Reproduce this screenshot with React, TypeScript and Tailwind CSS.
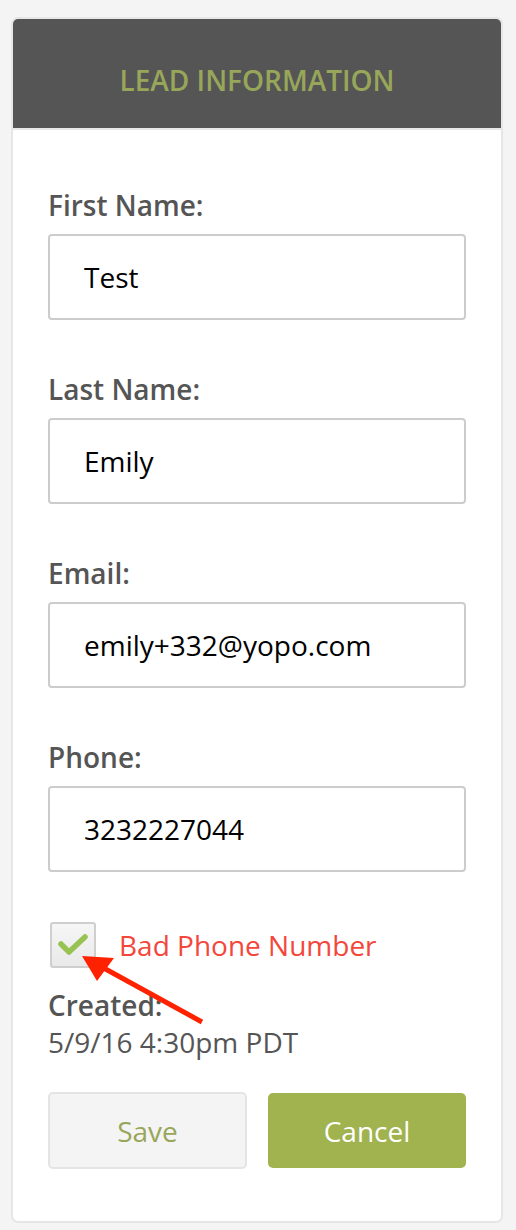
const FIELDS = [
  { label: "First Name:", value: "Test" },
  { label: "Last Name:", value: "Emily" },
  { label: "Email:", value: "emily+332@yopo.com" },
  { label: "Phone:", value: "3232227044" },
];

function Field({ label, value }: { label: string; value: string }) {
  return (
    <div className="mb-[50px]">
      <label className="block text-[28px] font-semibold leading-[38px] text-[#555555]">{label}</label>
      <div className="mt-[10px] flex h-[86px] items-center rounded-[4px] border-2 border-[#cccccc] bg-white pl-[34px] text-[28px] text-black">
        {value}
      </div>
    </div>
  );
}

export default function App() {
  return (
    <div
      className="relative min-h-[1230px] bg-[#f4f4f4] pl-[11px] pr-[13px] pt-[17px] pb-[8px]"
      style={{ fontFamily: '"Open Sans", "Noto Sans", sans-serif' }}
    >
      <div className="w-[492px] overflow-hidden rounded-[7px] border-2 border-[#e6e6e6] bg-white">
        {/* Header */}
        <div className="flex h-[111px] items-center justify-center border-b-2 border-[#e8e8e8] bg-[#555555] pt-[12px]">
          <h1 className="text-[28px] font-semibold text-[#98a65a]">LEAD INFORMATION</h1>
        </div>

        {/* Body */}
        <div className="px-[35px] pt-[56px] pb-[52px]">
          {FIELDS.map((f) => (
            <Field key={f.label} label={f.label} value={f.value} />
          ))}

          <div className="flex items-center gap-[23px] pl-[2px]">
            <span className="flex h-[46px] w-[46px] items-center justify-center rounded-[3px] border-2 border-[#cfcfcf] bg-gradient-to-b from-[#f6f6f6] to-[#e9e9e9]">
              <svg width="34" height="28" viewBox="0 0 34 28" className="blur-[0.5px]">
                <path d="M5 13 L13 21 L29 6" fill="none" stroke="#98c352" strokeWidth="5.5" strokeLinecap="round" strokeLinejoin="round" />
              </svg>
            </span>
            <span className="text-[28px] leading-[38px] text-[#f4473b]">Bad Phone Number</span>
          </div>

          <div className="mt-[19px]">
            <div className="text-[28px] font-semibold leading-[37px] text-[#555555]">Created:</div>
            <div className="text-[28px] leading-[37px] text-[#555555]">5/9/16 4:30pm PDT</div>
          </div>

          <div className="mt-[31px] flex items-center gap-[21px]">
            <button className="h-[77px] w-[199px] rounded-[5px] border-2 border-[#e4e4e4] bg-[#f4f4f4] text-[28px] text-[#98a65a]">
              Save
            </button>
            <button className="h-[75px] w-[198px] rounded-[5px] bg-[#a0b34f] text-[28px] text-white">
              Cancel
            </button>
          </div>
        </div>
      </div>

      {/* annotation arrow */}
      <svg className="pointer-events-none absolute left-0 top-0" width="516" height="1230">
        <line x1="202" y1="1022" x2="100" y2="966" stroke="#ff2200" strokeWidth="5" />
        <polygon points="82,956 114,958 97,981" fill="#ff2200" />
      </svg>
    </div>
  );
}
